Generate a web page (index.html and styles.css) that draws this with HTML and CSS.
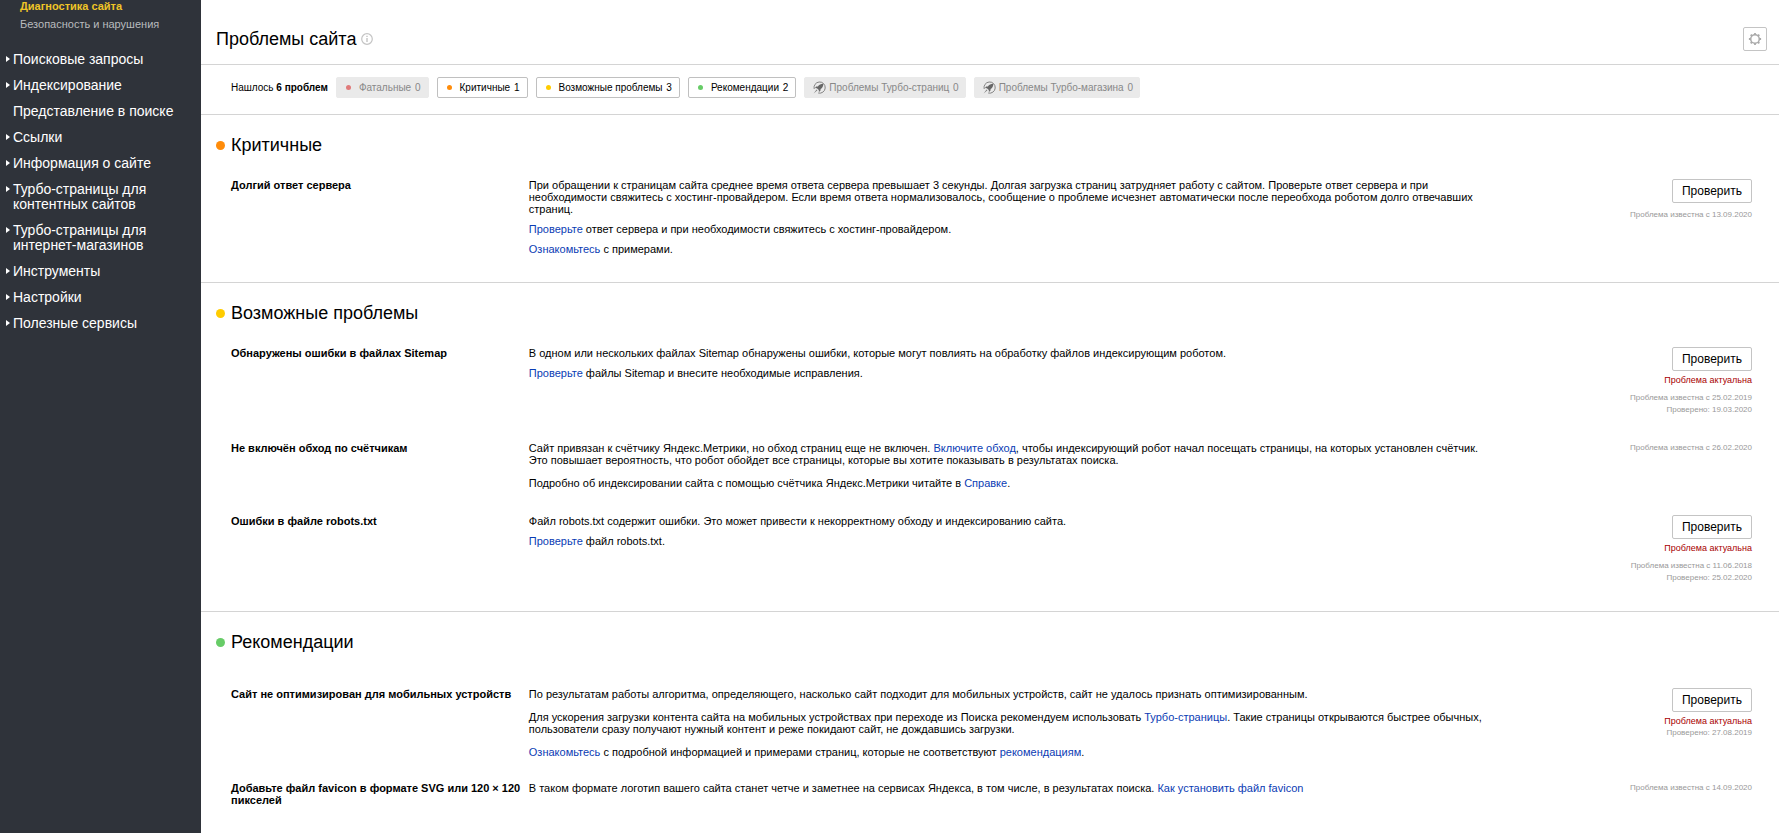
FILE: index.html
```
<!DOCTYPE html>
<html lang="ru">
<head>
<meta charset="utf-8">
<title>Проблемы сайта</title>
<link rel="stylesheet" href="styles.css">
</head>
<body>
<svg class="sprite" width="0" height="0" aria-hidden="true">
  <symbol id="rocket" viewBox="0 0 13 13">
    <path d="M1.200 8A5.600 5.600 0 1 1 5.200 12" fill="none" stroke="#777" stroke-width=".9"/>
    <path d="M10.300 2.700C7.800 2.700 6.100 3.800 4.900 5.400L3.200 5.600 2 7.100l1.900.1 1.900 1.900.1 1.900L7.400 9.800l.2-1.700c1.700-1.200 2.700-2.900 2.700-5.400z" fill="#666"/>
    <path d="M3.600 8.400L.6 12.400l3.800-3.200z" fill="#777"/>
  </symbol>
</svg>
<div class="layout">
  <aside class="sidebar">
    <nav>
      <ul class="submenu">
        <li><a class="submenu-link active" href="#">Диагностика сайта</a></li>
        <li><a class="submenu-link" href="#">Безопасность и нарушения</a></li>
      </ul>
      <ul class="menu">
        <li><a class="menu-link expandable" href="#">Поисковые запросы</a></li>
        <li><a class="menu-link expandable" href="#">Индексирование</a></li>
        <li><a class="menu-link" href="#">Представление в поиске</a></li>
        <li><a class="menu-link expandable" href="#">Ссылки</a></li>
        <li><a class="menu-link expandable" href="#">Информация о сайте</a></li>
        <li><a class="menu-link expandable" href="#">Турбо-страницы для контентных сайтов</a></li>
        <li><a class="menu-link expandable" href="#">Турбо-страницы для интернет-магазинов</a></li>
        <li><a class="menu-link expandable" href="#">Инструменты</a></li>
        <li><a class="menu-link expandable" href="#">Настройки</a></li>
        <li><a class="menu-link expandable" href="#">Полезные сервисы</a></li>
      </ul>
    </nav>
  </aside>
  <main class="content">
    <header class="page-head">
      <h1 class="page-title">Проблемы сайта</h1>
      <svg class="info" viewBox="0 0 12 12" role="img" aria-label="Справка"><circle cx="6" cy="6" r="5.300" fill="none" stroke="#c4c4c4" stroke-width="1.200"/><path d="M6 5v4M6 2.800v1.300" stroke="#c4c4c4" stroke-width="1.400"/></svg>
      <button class="settings" type="button" aria-label="Настройки">
        <svg viewBox="0 0 14 14"><circle cx="7" cy="7" r="4.300" fill="none" stroke="#aaa" stroke-width="1.500"/><path d="M7 .9v1.800M7 11.300v1.800M.9 7h1.800M11.300 7h1.800M2.700 2.700l1.300 1.300M10 10l1.300 1.300M11.300 2.700L10 4M4 10l-1.300 1.300" stroke="#aaa" stroke-width="1.800"/></svg>
      </button>
    </header>
    <div class="filters">
      <span class="found">Нашлось <b>6 проблем</b></span>
      <button class="chip" type="button" disabled><span class="chip-dot fatal"></span><span>Фатальные <span class="count">0</span></span></button>
      <button class="chip" type="button"><span class="chip-dot critical"></span><span>Критичные <span class="count">1</span></span></button>
      <button class="chip" type="button"><span class="chip-dot possible"></span><span>Возможные проблемы <span class="count">3</span></span></button>
      <button class="chip" type="button"><span class="chip-dot advice"></span><span>Рекомендации <span class="count">2</span></span></button>
      <button class="chip turbo" type="button" disabled><svg class="rocket"><use href="#rocket"/></svg><span>Проблемы Турбо-страниц <span class="count">0</span></span></button>
      <button class="chip turbo" type="button" disabled><svg class="rocket"><use href="#rocket"/></svg><span>Проблемы Турбо-магазина <span class="count">0</span></span></button>
    </div>

    <section class="group">
      <h2 class="group-title"><span class="dot critical"></span>Критичные</h2>
      <div class="problems">
        <article class="problem">
          <h3 class="problem-name">Долгий ответ сервера</h3>
          <div class="problem-text tight">
            <p>При обращении к страницам сайта среднее время ответа сервера превышает 3 секунды. Долгая загрузка страниц затрудняет работу с сайтом. Проверьте ответ сервера и при необходимости свяжитесь с хостинг-провайдером. Если время ответа нормализовалось, сообщение о проблеме исчезнет автоматически после переобхода роботом долго отвечавших страниц.</p>
            <p><a href="#">Проверьте</a> ответ сервера и при необходимости свяжитесь с хостинг-провайдером.</p>
            <p><a href="#">Ознакомьтесь</a> с примерами.</p>
          </div>
          <div class="problem-state">
            <button class="check" type="button">Проверить</button>
            <p class="dates">Проблема известна с 13.09.2020</p>
          </div>
        </article>
      </div>
    </section>

    <section class="group">
      <h2 class="group-title"><span class="dot possible"></span>Возможные проблемы</h2>
      <div class="problems">
        <article class="problem">
          <h3 class="problem-name">Обнаружены ошибки в файлах Sitemap</h3>
          <div class="problem-text tight">
            <p>В одном или нескольких файлах Sitemap обнаружены ошибки, которые могут повлиять на обработку файлов индексирующим роботом.</p>
            <p><a href="#">Проверьте</a> файлы Sitemap и внесите необходимые исправления.</p>
          </div>
          <div class="problem-state">
            <button class="check" type="button">Проверить</button>
            <p class="actual">Проблема актуальна</p>
            <p class="dates">Проблема известна с 25.02.2019<br>Проверено: 19.03.2020</p>
          </div>
        </article>
        <article class="problem">
          <h3 class="problem-name">Не включён обход по счётчикам</h3>
          <div class="problem-text">
            <p>Сайт привязан к счётчику Яндекс.Метрики, но обход страниц еще не включен. <a href="#">Включите обход</a>, чтобы индексирующий робот начал посещать страницы, на которых установлен счётчик. Это повышает вероятность, что робот обойдет все страницы, которые вы хотите показывать в результатах поиска.</p>
            <p>Подробно об индексировании сайта с помощью счётчика Яндекс.Метрики читайте в <a href="#">Справке</a>.</p>
          </div>
          <div class="problem-state">
            <p class="dates only">Проблема известна с 26.02.2020</p>
          </div>
        </article>
        <article class="problem">
          <h3 class="problem-name">Ошибки в файле robots.txt</h3>
          <div class="problem-text tight">
            <p>Файл robots.txt содержит ошибки. Это может привести к некорректному обходу и индексированию сайта.</p>
            <p><a href="#">Проверьте</a> файл robots.txt.</p>
          </div>
          <div class="problem-state">
            <button class="check" type="button">Проверить</button>
            <p class="actual">Проблема актуальна</p>
            <p class="dates">Проблема известна с 11.06.2018<br>Проверено: 25.02.2020</p>
          </div>
        </article>
      </div>
    </section>

    <section class="group spacious">
      <h2 class="group-title"><span class="dot advice"></span>Рекомендации</h2>
      <div class="problems">
        <article class="problem">
          <h3 class="problem-name">Сайт не оптимизирован для мобильных устройств</h3>
          <div class="problem-text">
            <p>По результатам работы алгоритма, определяющего, насколько сайт подходит для мобильных устройств, сайт не удалось признать оптимизированным.</p>
            <p>Для ускорения загрузки контента сайта на мобильных устройствах при переходе из Поиска рекомендуем использовать <a href="#">Турбо-страницы</a>. Такие страницы открываются быстрее обычных, пользователи сразу получают нужный контент и реже покидают сайт, не дождавшись загрузки.</p>
            <p><a href="#">Ознакомьтесь</a> с подробной информацией и примерами страниц, которые не соответствуют <a href="#">рекомендациям</a>.</p>
          </div>
          <div class="problem-state">
            <button class="check" type="button">Проверить</button>
            <p class="actual">Проблема актуальна</p>
            <p class="dates only">Проверено: 27.08.2019</p>
          </div>
        </article>
        <article class="problem">
          <h3 class="problem-name">Добавьте файл favicon в формате SVG или 120 × 120 пикселей</h3>
          <div class="problem-text">
            <p>В таком формате логотип вашего сайта станет четче и заметнее на сервисах Яндекса, в том числе, в результатах поиска. <a href="#">Как установить файл favicon</a></p>
          </div>
          <div class="problem-state">
            <p class="dates only">Проблема известна с 14.09.2020</p>
          </div>
        </article>
      </div>
    </section>
  </main>
</div>
</body>
</html>
```
FILE: styles.css
```
* { box-sizing: border-box; }

body {
  margin: 0;
  background: #fff;
  color: #000;
  font: 11px/12px "Liberation Sans", Arial, sans-serif;
}

h1, h2, h3, p, ul { margin: 0; padding: 0; font-size: inherit; font-weight: normal; }
ul { list-style: none; }
a { color: #0b3cb4; text-decoration: none; }
button { font-family: inherit; cursor: pointer; }
.sprite { display: none; }

.layout { display: flex; min-height: 100vh; }

.sidebar { flex: 0 0 201px; background: #2f333a; }
.submenu { display: flex; flex-direction: column; gap: 6px; padding-left: 20px; }
.submenu-link { display: block; color: #b9bbbe; }
.submenu-link.active { color: #f0c527; font-weight: bold; }
.menu { display: flex; flex-direction: column; gap: 11px; padding: 22px 20px 0 0; }
.menu-link { display: block; position: relative; padding-left: 13px; color: #fff; font-size: 14px; line-height: 15px; }
.menu-link.expandable::before {
  content: "";
  position: absolute;
  left: 6px;
  top: 4px;
  border: 3px solid transparent;
  border-left: 4px solid #fff;
  border-right: 0;
}

.content { flex: 1; min-width: 0; }

.page-head {
  display: flex;
  align-items: center;
  gap: 5px;
  padding: 27px 12px 13px 15px;
  border-bottom: 1px solid #d4d4d4;
}
.page-title { font-size: 18px; line-height: 22px; }
.info { width: 12px; height: 12px; }
.settings {
  display: grid;
  place-items: center;
  width: 24px;
  height: 24px;
  margin-left: auto;
  padding: 0;
  border: 1px solid #c4c4c4;
  border-radius: 2px;
  background: #fff;
}
.settings svg { width: 14px; height: 14px; }

.filters {
  display: flex;
  align-items: center;
  gap: 8px;
  padding: 12px 30px 16px;
  border-bottom: 1px solid #d4d4d4;
  font-size: 10px;
}
.found b { font-weight: bold; }
.chip {
  display: flex;
  align-items: center;
  gap: 8px;
  height: 21px;
  padding: 0 7px 0 9px;
  border: 1px solid #c0c0c0;
  border-radius: 2px;
  background: #fff;
  color: #000;
  font-size: 10px;
  white-space: nowrap;
}
.chip:disabled { border-color: #eaeaea; background: #eaeaea; color: #888; }
.chip.turbo { gap: 3px; padding: 0 6px 0 8px; }
.count { margin-left: 1px; }
.rocket { width: 13px; height: 13px; }
.chip-dot { width: 5px; height: 5px; border-radius: 50%; }
.dot { width: 9px; height: 9px; border-radius: 50%; }
.fatal { background: #e07a7a; }
.critical { background: #ff8c0a; }
.possible { background: #ffcc00; }
.advice { background: #67cc67; }

.group { padding: 18px 27px 27px 15px; }
.group + .group { border-top: 1px solid #d4d4d4; }
.group-title { display: flex; align-items: center; gap: 6px; font-size: 18px; line-height: 24px; }
.problems { display: flex; flex-direction: column; gap: 26px; padding: 22px 0 0 15px; }
.spacious .problems { gap: 24px; padding-top: 34px; }
.problem { display: grid; grid-template-columns: 298fr 958fr 266fr; }
.problem-name { font-weight: bold; }
.problem-text { display: flex; flex-direction: column; gap: 11px; }
.problem-text.tight { gap: 8px; }
.problem-state { display: flex; flex-direction: column; align-items: flex-end; text-align: right; }
.check {
  height: 24px;
  padding: 0 9px;
  border: 1px solid #c4c4c4;
  border-radius: 2px;
  background: #fff;
  color: #000;
  font-size: 12px;
}
.actual { padding-top: 3px; color: #a80000; font-size: 9px; }
.dates { padding-top: 6px; color: #999; font-size: 8px; }
.dates.only { padding-top: 0; }
```
